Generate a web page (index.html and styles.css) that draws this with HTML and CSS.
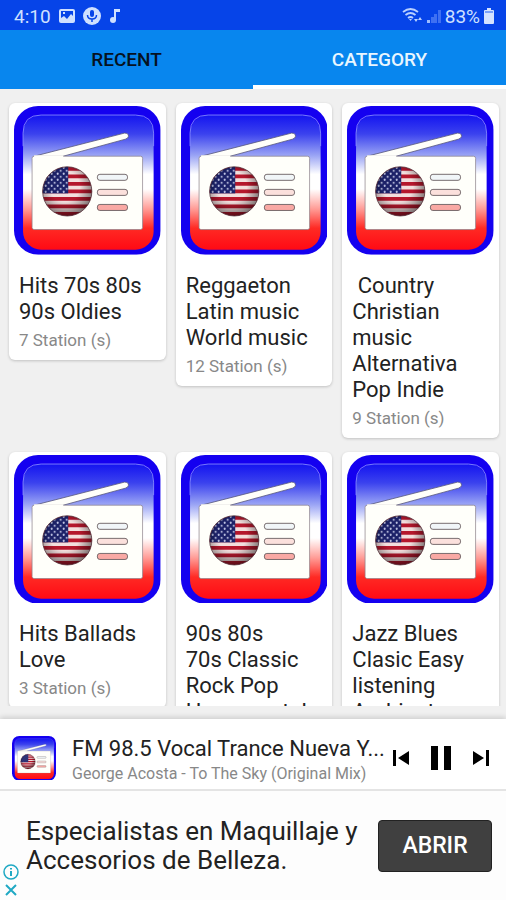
FILE: index.html
```html
<!DOCTYPE html>
<html lang="en">
<head>
  <meta charset="UTF-8" />
  <meta name="viewport" content="width=device-width, initial-scale=1" />
  <title>Radio Stations</title>
  <link rel="stylesheet" href="styles.css">
</head>
<body>
  <!-- shared radio artwork -->
  <svg class="defs" width="0" height="0" aria-hidden="true">
    <defs>
      <linearGradient id="sky" x1="0" y1="0" x2="0" y2="1">
        <stop offset="0" stop-color="#1414f0" />
        <stop offset="0.14" stop-color="#3b42ee" />
        <stop offset="0.3" stop-color="#9aa4f5" />
        <stop offset="0.44" stop-color="#fff" />
        <stop offset="0.55" stop-color="#fff" />
        <stop offset="0.7" stop-color="#ff9a94" />
        <stop offset="0.84" stop-color="#ff2a24" />
        <stop offset="1" stop-color="#ff0a14" />
      </linearGradient>
      <radialGradient id="shade" cx="0.45" cy="0.4" r="0.6">
        <stop offset="0.5" stop-color="#000" stop-opacity="0" />
        <stop offset="1" stop-color="#000" stop-opacity="0.5" />
      </radialGradient>
      <pattern id="stars" width="6" height="6" patternUnits="userSpaceOnUse">
        <rect width="6" height="6" fill="#1c2168" />
        <circle cx="1.5" cy="1.5" r="1" fill="#c9cdea" />
        <circle cx="4.5" cy="4.5" r="1" fill="#c9cdea" />
      </pattern>
      <clipPath id="globe"><circle cx="53" cy="85" r="24.5" /></clipPath>
      <symbol id="radio" viewBox="0 0 146 148">
        <rect width="146" height="148" rx="24" fill="#1400f0" />
        <rect x="9" y="9" width="130" height="134" rx="18" fill="url(#sky)" />
        <path d="M9 40V27Q9 9 27 9H121Q139 9 139 27V40" fill="none" stroke="#8f93ff" stroke-width="0.8" />
        <path d="M20 50L110 27Q114 27 114 30Q114 32 111 33L49 50Z" fill="#fffffa" stroke="#55557a" stroke-width="0.8" />
        <rect x="18" y="50" width="110" height="73" rx="2" fill="#fffffa" stroke="#8a8088" stroke-width="0.7" />
        <path d="M20 50L49 50" stroke="#fffffa" stroke-width="2" />
        <g clip-path="url(#globe)">
          <rect x="28" y="60" width="50" height="50" fill="#f3dedd" />
          <path d="M28 62.5H78M28 70H78M28 77.5H78M28 85H78M28 92.5H78M28 100H78M28 107.5H78" stroke="#b5172c" stroke-width="3.8" />
          <rect x="28" y="60" width="26" height="27" fill="url(#stars)" />
          <rect x="28" y="60" width="50" height="50" fill="url(#shade)" />
        </g>
        <circle cx="53" cy="85" r="24.5" fill="none" stroke="#55333c" stroke-width="0.8" />
        <g stroke="#6a5f62" stroke-width="0.9">
          <rect x="83" y="68" width="30" height="6" rx="2.5" fill="#f1f6f8" />
          <rect x="83" y="83" width="30" height="6" rx="2.5" fill="#fbe0dc" />
          <rect x="83" y="98" width="30" height="6" rx="2.5" fill="#f9a9a4" />
        </g>
      </symbol>
    </defs>
  </svg>

  <header class="status-bar">
    <div class="status-group">
      <span>4:10</span>
      <svg width="16" height="16" viewBox="0 0 16 16" aria-hidden="true">
        <path fill="#cfe0ff" fill-rule="evenodd" d="M2 1H14Q16 1 16 3V13Q16 15 14 15H2Q0 15 0 13V3Q0 1 2 1ZM2 3V10L5 8L8 11L12 6L14 8V3ZM4 4H6V6H4Z" />
      </svg>
      <svg width="18" height="18" viewBox="0 0 18 18" aria-hidden="true">
        <circle cx="9" cy="9" r="9" fill="#cfe0ff" />
        <rect x="7" y="3" width="4" height="7" rx="2" fill="#0644e8" />
        <path d="M4.5 8Q4.5 12 9 12Q13.5 12 13.5 8M9 12V15" fill="none" stroke="#0644e8" stroke-width="1.5" />
      </svg>
      <svg width="12" height="14" viewBox="0 0 12 14" aria-hidden="true">
        <circle cx="4" cy="11" r="3" fill="#cfe0ff" />
        <path d="M5 0H11V3H7V11H5Z" fill="#cfe0ff" />
      </svg>
    </div>
    <div class="status-group status-right">
      <svg width="21" height="16" viewBox="0 0 21 16" fill="none" stroke="#b9d0ff" stroke-width="1.8" aria-hidden="true">
        <path d="M1 4Q8.5 -2 16 4M3.5 7Q8.5 3 13.5 7M6 10Q8.5 8 11 10" />
        <path d="M7 11L8.5 13L10 11Z" fill="#b9d0ff" stroke="none" />
        <path d="M12 11L14 14L16 11ZM16 12L18 9L20 12Z" fill="#b9d0ff" stroke="none" />
      </svg>
      <svg width="14" height="14" viewBox="0 0 14 14" fill="#3f70f2" aria-hidden="true">
        <path fill="#9dbcff" d="M0 11H3V14H0Z" />
        <path d="M4 8H7V14H4ZM7 5H10V14H7ZM11 1H14V14H11Z" />
      </svg>
      <span>83%</span>
      <svg width="10" height="16" viewBox="0 0 10 16" aria-hidden="true">
        <path d="M3 0H7V2H9Q10 2 10 3V15Q10 16 9 16H1Q0 16 0 15V3Q0 2 1 2H3Z" fill="#d5e3ff" />
        <path d="M1 3H9V5H1Z" fill="#7ba2fa" />
      </svg>
    </div>
  </header>

  <nav class="tabs">
    <a href="#recent" class="tab">RECENT</a>
    <a href="#category" class="tab active">CATEGORY</a>
  </nav>

  <main class="categories" id="category">
    <article class="card">
      <svg class="cover" viewBox="0 0 146 148" aria-hidden="true"><use href="#radio" /></svg>
      <h2>Hits 70s 80s 90s Oldies</h2>
      <p>7 Station (s)</p>
    </article>
    <article class="card">
      <svg class="cover" viewBox="0 0 146 148" aria-hidden="true"><use href="#radio" /></svg>
      <h2>Reggaeton Latin music World music</h2>
      <p>12 Station (s)</p>
    </article>
    <article class="card">
      <svg class="cover" viewBox="0 0 146 148" aria-hidden="true"><use href="#radio" /></svg>
      <h2>&nbsp;Country Christian music Alternativa Pop Indie</h2>
      <p>9 Station (s)</p>
    </article>
    <article class="card">
      <svg class="cover" viewBox="0 0 146 148" aria-hidden="true"><use href="#radio" /></svg>
      <h2>Hits Ballads Love</h2>
      <p>3 Station (s)</p>
    </article>
    <article class="card">
      <svg class="cover" viewBox="0 0 146 148" aria-hidden="true"><use href="#radio" /></svg>
      <h2>90s 80s<br>70s Classic Rock Pop Heavy metal</h2>
    </article>
    <article class="card">
      <svg class="cover" viewBox="0 0 146 148" aria-hidden="true"><use href="#radio" /></svg>
      <h2>Jazz Blues Clasic Easy listening Ambient</h2>
    </article>
  </main>

  <section class="player">
    <svg class="thumb" viewBox="0 0 146 148" aria-hidden="true"><use href="#radio" /></svg>
    <div class="track">
      <div class="station">FM 98.5 Vocal Trance Nueva Y...</div>
      <div class="song">George Acosta - To The Sky (Original Mix)</div>
    </div>
    <div class="controls">
      <button type="button" aria-label="Previous">
        <svg width="16" height="16" viewBox="0 0 16 16"><path d="M0 0H3V16H0ZM16 1V15L5 8Z" /></svg>
      </button>
      <button type="button" aria-label="Pause">
        <svg width="20" height="24" viewBox="0 0 20 24"><path d="M0 0H7V24H0ZM13 0H20V24H13Z" /></svg>
      </button>
      <button type="button" aria-label="Next">
        <svg width="16" height="16" viewBox="0 0 16 16"><path d="M0 1V15L11 8ZM13 0H16V16H13Z" /></svg>
      </button>
    </div>
  </section>

  <aside class="ad">
    <div class="ad-marks">
      <a href="#info" aria-label="Ad info">
        <svg width="16" height="16" viewBox="0 0 16 16" fill="none" stroke="#20a9c4" stroke-width="1.5">
          <circle cx="8" cy="8" r="7" /><path d="M8 7V12M8 4V5.5" stroke-width="2" />
        </svg>
      </a>
      <a href="#close" aria-label="Close ad">
        <svg width="16" height="16" viewBox="0 0 16 16" fill="none" stroke="#20a9c4" stroke-width="2">
          <path d="M3 3L13 13M13 3L3 13" />
        </svg>
      </a>
    </div>
    <p class="ad-text">Especialistas en Maquillaje y<br>Accesorios de Belleza.</p>
    <button type="button" class="ad-button">ABRIR</button>
  </aside>
</body>
</html>
```
FILE: styles.css
```css
* {
  box-sizing: border-box;
}

body {
  font-family: Roboto, 'Liberation Sans', sans-serif;
  background: #f0f0f0;
  color: #222;
  margin: 0;
  height: 100vh;
  display: flex;
  flex-direction: column;
  overflow: hidden;
}

svg {
  display: block;
}

h2, p {
  margin: 0;
  font-weight: 400;
}

.defs {
  position: absolute;
}

.status-bar {
  display: flex;
  justify-content: space-between;
  align-items: center;
  height: 30px;
  padding: 2px 12px 0 14px;
  background: #0644e8;
  color: #cfe0ff;
  font-size: 19px;
  flex: none;
}

.status-group {
  display: flex;
  align-items: center;
  gap: 8px;
}

.status-right {
  gap: 4px;
}

.tabs {
  display: flex;
  height: 59px;
  background: #0886ee;
  flex: none;
}

.tab {
  flex: 1;
  display: flex;
  align-items: center;
  justify-content: center;
  border-top: 4px solid transparent;
  border-bottom: 4px solid transparent;
  color: #06121f;
  font-size: 19px;
  font-weight: 500;
  text-decoration: none;
}

.tab.active {
  color: #e9f6ff;
  border-bottom-color: #fff;
}

.categories {
  flex: 1;
  min-height: 0;
  overflow: hidden;
  display: grid;
  grid-template-columns: repeat(3, 1fr);
  align-items: start;
  align-content: start;
  gap: 14px 10px;
  padding: 14px 7px 0 9px;
}

.card {
  background: #fff;
  border-radius: 6px;
  padding: 3px 5px 9px;
  box-shadow: 0 1px 3px rgba(0, 0, 0, 0.2);
}

.cover {
  width: 100%;
}

.card h2 {
  margin-top: 18px;
  padding: 0 5px;
  font-size: 22px;
  line-height: 26px;
}

.card p {
  padding: 4px 5px 0;
  color: #888;
  font-size: 17px;
  line-height: 22px;
}

.player {
  display: flex;
  align-items: center;
  height: 72px;
  margin-top: 13px;
  padding: 8px 17px 0 12px;
  background: #fff;
  border-bottom: 2px solid #e4e4e4;
  box-shadow: 0 -2px 5px rgba(0, 0, 0, 0.14);
  flex: none;
}

.thumb {
  width: 44px;
  flex: none;
}

.track {
  flex: 1;
  min-width: 0;
  margin: 4px 6px 0 16px;
}

.station, .song {
  white-space: nowrap;
}

.station {
  font-size: 22px;
  line-height: 28px;
}

.song {
  color: #888;
  font-size: 16px;
  line-height: 22px;
}

.controls {
  display: flex;
  align-items: center;
  gap: 22px;
}

.controls button {
  padding: 0;
  border: none;
  background: none;
  cursor: pointer;
}

.ad {
  display: flex;
  align-items: center;
  height: 109px;
  padding-right: 14px;
  background: #fdfdfd;
  flex: none;
}

.ad-marks {
  display: flex;
  flex-direction: column;
  gap: 2px;
  align-self: flex-end;
  padding: 0 7px 2px 3px;
}

.ad-text {
  flex: 1;
  min-width: 0;
  font-size: 26px;
  line-height: 29px;
  white-space: nowrap;
}

.ad-button {
  width: 114px;
  height: 52px;
  border: 1px solid #222;
  border-radius: 4px;
  background: #404040;
  color: #fff;
  font-family: inherit;
  font-size: 23px;
  font-weight: 500;
  cursor: pointer;
}
```
